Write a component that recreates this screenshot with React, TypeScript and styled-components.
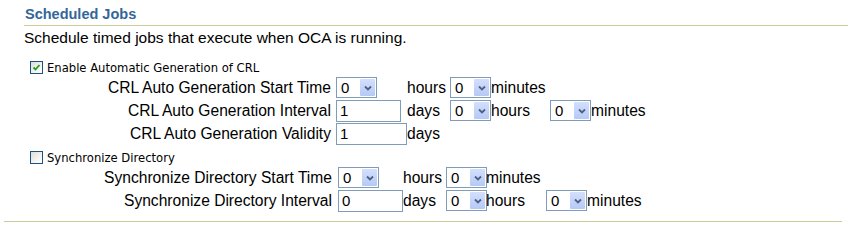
import React from 'react';
import styled, { createGlobalStyle } from 'styled-components';

const GlobalStyle = createGlobalStyle`
  body {
    margin: 0;
    background: #ffffff;
    font-family: "Liberation Sans", Arial, sans-serif;
    color: #000000;
  }
`;

const Page = styled.div`
  width: 848px;
  height: 222px;
  box-sizing: border-box;
  padding-top: 5px;
  overflow: hidden;
`;

const Header = styled.h2`
  margin: 0 0 0 24px;
  padding: 0 0 2px 1px;
  font-size: 14.5px;
  line-height: 18px;
  font-weight: bold;
  color: #336699;
  border-bottom: 1px solid #cccc99;
`;

const Description = styled.div`
  margin: 3px 0 0 24px;
  font-size: 15.5px;
  line-height: 18px;
`;

const CheckRow = styled.label<{ $top: number }>`
  display: flex;
  align-items: center;
  gap: 4px;
  margin-left: 30px;
  margin-top: ${(p) => p.$top}px;
  height: 13px;
  font-family: "DejaVu Sans", sans-serif;
  font-size: 11.6px;
`;

const Box = styled.span`
  width: 11px;
  height: 11px;
  border: 1px solid #1c5180;
  background: linear-gradient(135deg, #dcdcd7 0%, #ffffff 90%);
  display: flex;
  align-items: center;
  justify-content: center;
`;

const Grid = styled.div<{ $cols: string }>`
  display: grid;
  grid-template-columns: ${(p) => p.$cols};
  grid-auto-rows: 23px;
  margin-left: 104px;
  margin-top: 2px;
  font-size: 15.6px;
  align-items: center;
`;

const Label = styled.span<{ $pad: number }>`
  text-align: right;
  padding-right: ${(p) => p.$pad}px;
  white-space: nowrap;
`;

const Unit = styled.span`
  white-space: nowrap;
`;

const TextInput = styled.div<{ $w: number }>`
  width: ${(p) => p.$w}px;
  height: 22px;
  box-sizing: border-box;
  border: 1px solid #7f9db9;
  padding-left: 3px;
  font-size: 15px;
  line-height: 20px;
  background: #fff;
`;

const SelectBox = styled.div`
  width: 41px;
  height: 21px;
  box-sizing: border-box;
  border: 1px solid #7f9db9;
  display: flex;
  align-items: center;
  justify-content: space-between;
  padding: 1px;
  background: #fff;
`;

const SelectValue = styled.span`
  padding-left: 3px;
  font-size: 15px;
  line-height: 17px;
`;

const Arrow = styled.span`
  width: 15px;
  height: 17px;
  border-radius: 1px;
  background: linear-gradient(180deg, #d3dffc 0%, #b6c9f6 100%);
  display: flex;
  align-items: center;
  justify-content: center;
`;

const Footer = styled.div<{ $top: number }>`
  margin: ${(p) => p.$top}px 6px 0 4px;
  border-top: 1px solid #cccc99;
`;

const Select = ({ value }: { value: string }) => (
  <SelectBox>
    <SelectValue>{value}</SelectValue>
    <Arrow>
      <svg width="8" height="6" viewBox="0 0 8 6">
        <path d="M1 1.5 L4 4.5 L7 1.5" fill="none" stroke="#4d6185" strokeWidth="1.8" />
      </svg>
    </Arrow>
  </SelectBox>
);

const Check = ({ checked, text, top }: { checked?: boolean; text: string; top: number }) => (
  <CheckRow $top={top}>
    <Box>
      {checked && (
        <svg width="9" height="9" viewBox="0 0 9 9">
          <path d="M1.5 4.5 L3.5 6.5 L7.5 2" fill="none" stroke="#21a121" strokeWidth="1.8" />
        </svg>
      )}
    </Box>
    {text}
  </CheckRow>
);

export default function App() {
  return (
    <Page>
      <GlobalStyle />
      <Header>Scheduled Jobs</Header>
      <Description>Schedule timed jobs that execute when OCA is running.</Description>

      <Check checked text="Enable Automatic Generation of CRL" top={14} />
      <Grid $cols="232px 71px 43px 41px 59px 41px auto">
        <Label $pad={5}>CRL Auto Generation Start Time</Label>
        <Select value="0" />
        <Unit>hours</Unit>
        <Select value="0" />
        <Unit>minutes</Unit>
        <span />
        <span />

        <Label $pad={5}>CRL Auto Generation Interval</Label>
        <TextInput $w={65}>1</TextInput>
        <Unit>days</Unit>
        <Select value="0" />
        <Unit>hours</Unit>
        <Select value="0" />
        <Unit>minutes</Unit>

        <Label $pad={5}>CRL Auto Generation Validity</Label>
        <TextInput $w={71}>1</TextInput>
        <Unit>days</Unit>
      </Grid>

      <Check text="Synchronize Directory" top={6} />
      <Grid $cols="234px 65px 43px 40px 60px 41px auto">
        <Label $pad={6}>Synchronize Directory Start Time</Label>
        <Select value="0" />
        <Unit>hours</Unit>
        <Select value="0" />
        <Unit>minutes</Unit>
        <span />
        <span />

        <Label $pad={6}>Synchronize Directory Interval</Label>
        <TextInput $w={65}>0</TextInput>
        <Unit>days</Unit>
        <Select value="0" />
        <Unit>hours</Unit>
        <Select value="0" />
        <Unit>minutes</Unit>
      </Grid>
      <Footer $top={9} />
    </Page>
  );
}
